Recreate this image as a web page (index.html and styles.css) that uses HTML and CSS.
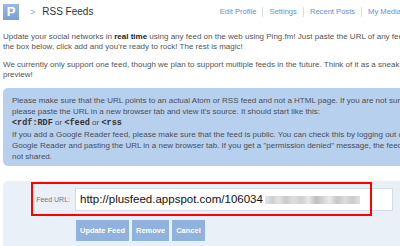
FILE: index.html
```html
<!DOCTYPE html>
<html lang="en">
<head>
    <meta charset="UTF-8">
    <title>RSS Feeds</title>
    <link rel="stylesheet" href="styles.css">
</head>
<body>
<div class="page">

    <!-- Header -->
    <header class="top">
        <div class="crumb">
            <span class="logo">P</span>
            <span class="arrow">&gt;</span>
            <h1>RSS Feeds</h1>
        </div>
        <nav class="menu">
            <a href="#">Edit Profile</a>
            <a href="#">Settings</a>
            <a href="#">Recent Posts</a>
            <a href="#">My Media</a>
        </nav>
    </header>

    <p class="intro">Update your social networks in <b>real time</b> using any feed on the web using Ping.fm! Just paste the URL of any feed in<br>the box below, click add and you're ready to rock! The rest is magic!</p>
    <p class="intro">We currently only support one feed, though we plan to support multiple feeds in the future. Think of it as a sneak<br>preview!</p>

    <!-- Help box -->
    <div class="notice">
        Please make sure that the URL points to an actual Atom or RSS feed and not a HTML page. If you are not sure,<br>
        please paste the URL in a new browser tab and view it's source. It should start like this:<br>
        <code>&lt;rdf:RDF</code> or <code>&lt;feed</code> or <code>&lt;rss</code><br>
        If you add a Google Reader feed, please make sure that the feed is public. You can check this by logging out of<br>
        Google Reader and pasting the URL in a new browser tab. If you get a "permission denied" message, the feed is<br>
        not shared.
    </div>

    <!-- Feed form -->
    <form class="feed-form">
        <div class="field">
            <label>Feed URL:</label>
            <div class="url-box">http://plusfeed.appspot.com/106034<span class="blur"></span></div>
            <div class="highlight"></div>
        </div>
        <div class="actions">
            <button type="button">Update Feed</button>
            <button type="button">Remove</button>
            <button type="button">Cancel</button>
        </div>
    </form>

</div>
</body>
</html>
```

FILE: styles.css
```css
body {
    margin: 0;
    background: #fff;
    font-family: 'Liberation Sans', Arial, sans-serif;
    font-size: 8px;
    color: #555;
    overflow: hidden;
}

.page {
    width: 540px;
    padding: 3px;
}

/* Header */
.top {
    display: flex;
    justify-content: space-between;
    align-items: center;
    height: 17px;
}
.crumb {
    display: flex;
    align-items: center;
}
.logo {
    width: 16px;
    height: 16px;
    background: linear-gradient(#9db9e2, #7b9fd3);
    color: #fff;
    font-weight: bold;
    font-size: 13px;
    line-height: 16px;
    text-align: center;
}
.arrow {
    color: #98a9c9;
    font-size: 9px;
    margin: 0 7px 0 11px;
}
h1 {
    margin: 0;
    font-size: 10px;
    font-weight: normal;
    color: #333;
}
.menu {
    display: flex;
    align-items: center;
    margin-right: 136px;
}
.menu a {
    color: #6c8ccb;
    font-size: 7.6px;
    text-decoration: none;
    padding: 0 6px;
    border-left: 1px solid #d8dde6;
    line-height: 10px;
}
.menu a:first-child {
    border-left: none;
}

/* Intro text */
.intro {
    margin: 12px 0 0;
    line-height: 10px;
    white-space: nowrap;
}
.intro + .intro {
    margin-top: 8px;
}
.intro b {
    color: #222;
}

/* Help box */
.notice {
    margin-top: 8px;
    background: #b6d0ee;
    border-radius: 5px;
    padding: 7px 9px 4px;
    line-height: 11px;
    white-space: nowrap;
    color: #4a4f57;
}
.notice code {
    font-family: 'Liberation Mono', monospace;
    font-weight: bold;
    font-size: 8.5px;
    color: #333;
}

/* Form */
.feed-form {
    margin-top: 15px;
    background: #eaf0f8;
    border-radius: 5px;
    padding: 7px 0 10px;
}
.field {
    position: relative;
    display: flex;
    align-items: center;
}
.field label {
    width: 67px;
    text-align: right;
    padding-right: 5px;
    font-size: 7px;
    color: #777;
}
.url-box {
    width: 312px;
    height: 21px;
    background: #fff;
    border: 1px solid #d6dce6;
    font-size: 11.5px;
    line-height: 21px;
    color: #111;
    padding-left: 4px;
    display: flex;
    align-items: center;
}
.blur {
    display: inline-block;
    width: 95px;
    height: 8px;
    margin-left: 2px;
    background: linear-gradient(90deg, #e6e6e6 0, #cfcfcf 8%, #e4e4e4 14%, #c9c9c9 22%, #dedede 30%, #d0d0d0 38%, #e8e8e8 46%, #bdbdbd 54%, #d8d8d8 62%, #e9e9e9 68%, #c6c6c6 76%, #dcdcdc 84%, #cbcbcb 92%, #e2e2e2 100%);
    filter: blur(0.6px);
}
.highlight {
    position: absolute;
    left: 28px;
    top: -6px;
    width: 337px;
    height: 30px;
    border: 2px solid #f00;
}
.actions {
    display: flex;
    gap: 3px;
    padding-left: 73px;
    margin-top: 9px;
}
.actions button {
    background: #90b2de;
    color: #fff;
    border: none;
    font-family: 'Liberation Sans', Arial, sans-serif;
    font-weight: bold;
    font-size: 7.5px;
    height: 21px;
    padding: 0 4px;
}
```
